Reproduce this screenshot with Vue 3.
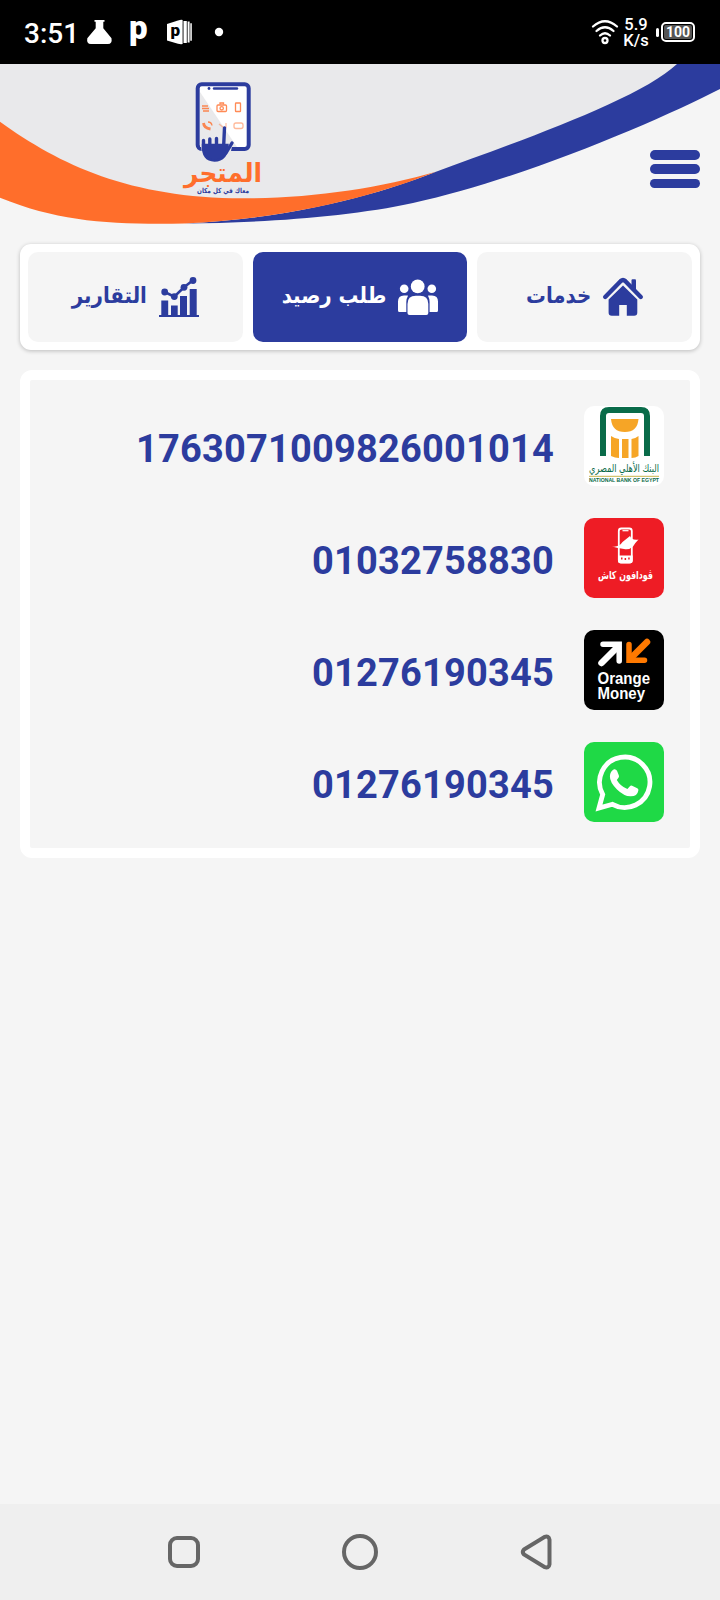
<template>
  <div class="screen">
    <div class="status">
      <span class="status__time">3:51</span>
      <svg class="status__apps" width="140" height="28" viewBox="85 18 140 28" fill="#fff">
        <path d="M94.5 20h10v1.8h-1.2v6.4l8.2 10q1 5.8-3.600 5.800h-17q-4.600 0-3.600-5.800l8.400-10v-6.400h-1.200z" />
        <text x="129" y="38.500" class="status__p">p</text>
        <path d="M167 24l11-3.600q3-.8 4.600-.4v24q-2 .4-4.600-.3L167 40.500z" />
        <path d="M183.500 21h3.300v22h-3.300zM187.600 21.600h2v20.800h-2zM190.300 23.200h1.500v17.600h-1.500z" />
        <text x="170.500" y="36" class="status__pp">p</text>
        <circle cx="219" cy="32" r="4.200" />
      </svg>
      <div class="status__right">
        <svg width="28" height="26" viewBox="0 0 28 26" fill="none" stroke="#fff" stroke-width="2.300" stroke-linecap="round">
          <path d="M2 7.500q12-10.500 24 0M5.500 12q8.500-7.500 17 0M9 16.500q5-4.500 10 0" />
          <circle cx="14" cy="21.500" r="2.500" />
        </svg>
        <div class="status__speed"><span>5.9</span><span>K/s</span></div>
        <div class="battery"><i class="battery__nub" /><span class="battery__body">100</span></div>
      </div>
    </div>

    <header class="header">
      <svg class="header__bg" width="720" height="162" viewBox="0 64 720 162">
        <path fill="#e9e9eb" stroke="#e9e9eb" d="M0 64H677C640 99 520 141 436 171.800C380 188 310 198.500 243 198.300C130 198 60 165 0 121.700Z" />
        <path fill="#2c3c9e" d="M184 223.500C310 218 400 186 436 171.800C520 141 640 99 677 64H720V89C660 120 520 180 413 203C349 217 260 223 184 223.500Z" />
        <path fill="#ff6e2b" d="M0 121.700C60 165 130 198 243 198.300C310 198.500 380 188 436 171.700C400 186 310 218 184 223.500C110 224.500 60 222 0 197.700Z" />
        <rect x="197.700" y="84.300" width="51" height="64.700" rx="4" fill="#fff" stroke="#2c3c9e" stroke-width="4" />
        <path d="M200 92l37 55h-37z" fill="#e9e9eb" />
        <path d="M214 88.500h23" stroke="#2c3c9e" stroke-width="2.400" stroke-linecap="round" />
        <circle cx="209" cy="88.500" r="1.400" fill="#2c3c9e" />
        <g fill="none" stroke="#ff6e2b" stroke-width="1.300" opacity=".8">
          <path d="M202 106h6M202 108.500h7M203 111h6" />
          <rect x="217" y="105" width="9.500" height="6.500" rx="1" /><circle cx="221.700" cy="108.300" r="1.700" /><path d="M220 104.500v-1.500h3.500v1.500" />
          <rect x="235.500" y="103" width="5" height="8.500" rx=".6" />
          <path d="M203.500 123q.5 5 7 6" stroke-width="2.800" /><path d="M208 122q3.500 0 4 3.500" />
          <path d="M219 124l5 4m2-5v5" opacity=".5" />
          <rect x="234" y="123" width="9" height="5.500" rx="2" opacity=".6" />
        </g>
        <path d="M200 140l3-4h19v-8h4v12l7 2-4 18h-26z" fill="#e9e9eb" />
        <g stroke="#2c3c9e" stroke-linecap="round" stroke-width="3.400" fill="#2c3c9e">
          <path d="M203.500 140.500v9M209.800 139v10M216.500 138.500v11M224.500 128l-1 21M232 143l-6 10" fill="none" />
          <path d="M203 145H227.500q-.5 15.500-13 15.500Q202.500 160.500 203 145z" stroke-width="2.400" />
        </g>
        <text x="223" y="181.500" class="brand" textLength="78" lengthAdjust="spacingAndGlyphs">المتجر</text>
        <text x="223" y="192.500" class="tagline" textLength="52" lengthAdjust="spacingAndGlyphs">معاك في كل مكان</text>
      </svg>
      <button class="menu" aria-label="القائمة"><i /><i /><i /></button>
    </header>

    <nav class="tabs" dir="rtl">
      <button
        v-for="tab in tabs"
        :key="tab.id"
        class="tab"
        :class="{ 'is-active': tab.id === active }"
        @click="active = tab.id"
      >
        <svg v-if="tab.id === 'services'" class="tab__icon" viewBox="0 0 40 40" fill="currentColor">
          <path d="M28.500 3.500q0-1.200 1-1.200h2.500q1 0 1 1.200v11l-4.500-4z" />
          <path d="M2.200 20L17.800 4q2.200-2 4.400 0L37.800 20" fill="none" stroke="currentColor" stroke-width="4.400" stroke-linecap="round" />
          <path d="M20 8.500L34.300 22.500V35.500q0 3.200-3.200 3.200H23.800V28H16.200V38.700H8.800q-3.200 0-3.200-3.200V22.500z" />
        </svg>
        <svg v-else-if="tab.id === 'balance'" class="tab__icon" viewBox="0 0 40 40" fill="currentColor">
          <circle cx="19.700" cy="9.400" r="6.900" />
          <circle cx="6.200" cy="11.700" r="4.300" />
          <circle cx="33.800" cy="11.700" r="4.300" />
          <path d="M0 24.500q0-6 6-6h3.500q.8 0 .3.700Q8.300 21.500 8.300 25v10H1.500Q0 35 0 33.500zM40 24.500q0-6-6-6h-3.500q-.8 0-.3.700 1.400 2.300 1.400 5.800v10h6.900q1.500 0 1.500-1.500z" />
          <path d="M9.500 27q0-8.300 8.300-8.300h4.200q8.300 0 8.300 8.300v9q0 2-2 2H11.500q-2 0-2-2z" />
        </svg>
        <svg v-else class="tab__icon" viewBox="0 0 40 40" fill="currentColor">
          <path d="M2.300 23.500h6.900V38h2.800v-9.500h6.700V38H21V19h7v19h2.700V12h7v26H40v2H0v-2h2.300z" />
          <path d="M5.700 15l9.600 4.700L25 10.300l9-7" fill="none" stroke="currentColor" stroke-width="2.600" />
          <circle cx="5.700" cy="15" r="3.400" /><circle cx="15.300" cy="19.600" r="3.400" />
          <circle cx="25" cy="10.300" r="3.400" /><circle cx="34" cy="3.500" r="3.400" />
        </svg>
        <span class="tab__label">{{ tab.label }}</span>
      </button>
    </nav>

    <main class="panel" dir="rtl">
      <div v-for="item in accounts" :key="item.id" class="account">
        <svg v-if="item.id === 'nbe'" class="account__logo" viewBox="0 0 80 80">
          <rect width="80" height="80" rx="10" fill="#fff" />
          <path d="M19 50V10q0-6 6-6h32q6 0 6 6v40" fill="none" stroke="#096b49" stroke-width="6" />
          <g fill="#f6a526">
            <path d="M27 13h27.500q-1 13-13.700 13T27 13z" />
            <path d="M27 30q3.500 2.500 8 3v19q-4 0-8-2zM38 33h6.500v19H38zM47.500 33q4-.5 7-3v20q-3 2-7 2z" />
          </g>
          <text x="40" y="66" class="nbe-ar" textLength="70" lengthAdjust="spacingAndGlyphs">البنك الأهلي المصري</text>
          <path d="M5 70.300h70" stroke="#c7b44a" stroke-width="1" />
          <text x="40" y="76.300" class="nbe-en" textLength="70" lengthAdjust="spacingAndGlyphs" direction="ltr">NATIONAL BANK OF EGYPT</text>
        </svg>
        <svg v-else-if="item.id === 'vodafone'" class="account__logo" viewBox="0 0 80 80">
          <rect width="80" height="80" rx="10" fill="#ee1c25" />
          <rect x="34.800" y="10.500" width="13" height="34" rx="2.500" fill="none" stroke="#fff" stroke-width="1.800" />
          <path d="M34 37.500h14.700V43q0 2.300-2.300 2.300H36.300Q34 45.300 34 43z" fill="#fff" />
          <path d="M37 40.500h1.500M40.600 41h1.500M44.200 40.500h1.500" stroke="#ee1c25" stroke-width="2" />
          <path d="M38.500 12.700h6" stroke="#fff" stroke-width="1.200" />
          <path d="M28 28.500q7 1 10.500-4.500l7.500-6q1.500 4.500 8.500 3.500-4 4-5.500 7-3.500 3.500-9 2.500-6-1-12-2.500z" fill="#fff" />
          <text x="41.500" y="61" class="voda" textLength="55" lengthAdjust="spacingAndGlyphs">ڤودافون كاش</text>
        </svg>
        <svg v-else-if="item.id === 'orange'" class="account__logo" viewBox="0 0 80 80">
          <rect width="80" height="80" rx="10" fill="#000" />
          <path d="M17.500 33L34 16.500" stroke="#fff" stroke-width="6.500" stroke-linecap="round" fill="none" />
          <path d="M19 14.300H35.200V31" stroke="#fff" stroke-width="5.500" fill="none" stroke-linecap="round" />
          <path d="M63 12L46.500 28.500" stroke="#ff7900" stroke-width="6.500" stroke-linecap="round" fill="none" />
          <path d="M45 14.500V30.300H60.500" stroke="#ff7900" stroke-width="5.500" fill="none" stroke-linecap="round" />
          <text x="13.500" y="53.500" class="orange" direction="ltr" textLength="52.500" lengthAdjust="spacingAndGlyphs">Orange</text>
          <text x="13.500" y="68.500" class="orange" direction="ltr" textLength="47.500" lengthAdjust="spacingAndGlyphs">Money</text>
        </svg>
        <svg v-else class="account__logo" viewBox="0 0 80 80">
          <rect width="80" height="80" rx="10" fill="#1fd946" />
          <path d="M15 66l3.700-13.500a25.200 25.200 0 1 1 9.800 9.800z" fill="none" stroke="#fff" stroke-width="4.800" />
          <path d="M30 27.200q2-.4 3 1.500l1.800 4.500q.6 1.300-.3 2.500l-1.700 2.300q3.600 6.300 10.600 9.100l2.500-2.800q.9-1.100 2.200-.5l5.200 2.500q1.500.8 1 2.500-1 5.500-7.400 5.500-6.500.3-13.900-6.800-7.300-7.300-7.100-13.200.2-4.900 4.100-7.100z" fill="#fff" />
        </svg>
        <span class="account__number" dir="ltr">{{ item.number }}</span>
      </div>
    </main>

    <footer class="navbar">
      <svg width="40" height="40" viewBox="0 0 40 40"><rect x="6" y="6" width="28" height="28" rx="7" /></svg>
      <svg width="40" height="40" viewBox="0 0 40 40"><circle cx="20" cy="20" r="16" /></svg>
      <svg width="40" height="40" viewBox="0 0 40 40"><path d="M8 17.500L28 5.200q5-2 5.500 2.500v24.600q-.5 4.500-5.500 2.500L8 22.500q-2.500-2.500 0-5z" /></svg>
    </footer>
  </div>
</template>

<script setup>
import { ref } from 'vue';

const active = ref('balance');

const tabs = [
  { id: 'services', label: 'خدمات' },
  { id: 'balance', label: 'طلب رصيد' },
  { id: 'reports', label: 'التقارير' },
];

const accounts = [
  { id: 'nbe', number: '1763071009826001014' },
  { id: 'vodafone', number: '01032758830' },
  { id: 'orange', number: '01276190345' },
  { id: 'whatsapp', number: '01276190345' },
];
</script>

<style>
html, body{ margin: 0; background: #f5f5f5; }
</style>

<style scoped>
.screen{ display: flex; flex-direction: column; width: 720px; height: 1600px; background: #f5f5f5; font-family: Roboto, "Noto Sans", "DejaVu Sans", sans-serif; overflow: hidden; }
button{ border: 0; padding: 0; font: inherit; cursor: pointer; }
svg{ overflow: visible; }

.status{ display: flex; align-items: center; height: 64px; flex: none; box-sizing: border-box; padding: 0 25px 0 24px; background: #000; color: #fff; }
.status__time{ width: 61px; font-size: 28px; font-weight: 500; line-height: 32px; padding-top: 3px; }
.status__p{ font: 900 33px Roboto, sans-serif; }
.status__pp{ font: 900 17px Roboto, sans-serif; fill: #000; }
.status__right{ display: flex; align-items: center; margin-left: auto; }
.status__speed{ display: flex; flex-direction: column; align-items: center; width: 26px; margin: 2px 7px 0 4px; font-size: 16.5px; font-weight: 500; line-height: 16px; }
.battery{ display: flex; align-items: center; gap: 2px; }
.battery__nub{ width: 3px; height: 9px; border-radius: 2px; background: #fff; }
.battery__body{ box-sizing: border-box; width: 34px; height: 20px; border: 2px solid #fff; border-radius: 5px; background: #555; background-clip: content-box; padding: 1px; font-size: 14px; font-weight: 700; line-height: 14px; text-align: center; }

.header{ position: relative; display: flex; justify-content: flex-end; flex: none; height: 180px; box-sizing: border-box; padding: 86px 20px 0 0; }
.header__bg{ position: absolute; left: 0; top: 0; overflow: hidden; }
.brand{ font: 700 26px "DejaVu Sans", sans-serif; fill: #ff6e2b; text-anchor: middle; }
.tagline{ font: 700 7px "DejaVu Sans", sans-serif; fill: #2c3c9e; text-anchor: middle; }
.menu{ position: relative; display: flex; flex-direction: column; justify-content: space-between; width: 50px; height: 38px; background: none; }
.menu i{ display: block; width: 50px; height: 9.5px; border-radius: 5px; background: #2c3c9e; }

.tabs{ display: flex; gap: 10px; flex: none; box-sizing: border-box; height: 106px; margin: 0 20px; padding: 8px; border-radius: 11px; background: #fff; box-shadow: 0 1px 4px rgba(0,0,0,.24); }
.tab{ display: flex; flex: 1 1 0; align-items: center; justify-content: center; gap: 12px; border-radius: 10px; background: #f5f5f5; color: #2c3c9e; font-family: "DejaVu Sans Condensed", "DejaVu Sans", sans-serif; font-stretch: condensed; font-size: 22px; font-weight: 700; white-space: nowrap; }
.tab.is-active{ background: #2c3c9e; color: #fff; }
.tab__icon{ width: 40px; height: 40px; flex: none; }
.tab__label{ padding-bottom: 3px; }

.panel{ display: flex; flex-direction: column; gap: 32px; flex: none; margin: 20px 20px 0; padding: 26px; border: 10px solid #fff; border-radius: 12px; }
.account{ display: flex; align-items: center; gap: 30px; height: 80px; }
.account__logo{ width: 80px; height: 80px; flex: none; }
.account__number{ color: #2c3c9e; font-size: 38px; font-weight: 700; line-height: 44px; letter-spacing: .2px; padding-top: 5px; }
.nbe-ar{ font: 11px "DejaVu Sans", sans-serif; fill: #096b49; text-anchor: middle; }
.nbe-en{ font: 700 6px "Liberation Sans", sans-serif; fill: #096b49; text-anchor: middle; }
.voda{ font: 700 11px "DejaVu Sans", sans-serif; fill: #fff; text-anchor: middle; }
.orange{ font: 700 16px "Liberation Sans", sans-serif; fill: #fff; }

.navbar{ display: flex; align-items: center; justify-content: center; gap: 136px; flex: none; height: 96px; margin-top: auto; background: #efefef; }
.navbar svg{ fill: none; stroke: #666; stroke-width: 4; }
</style>
